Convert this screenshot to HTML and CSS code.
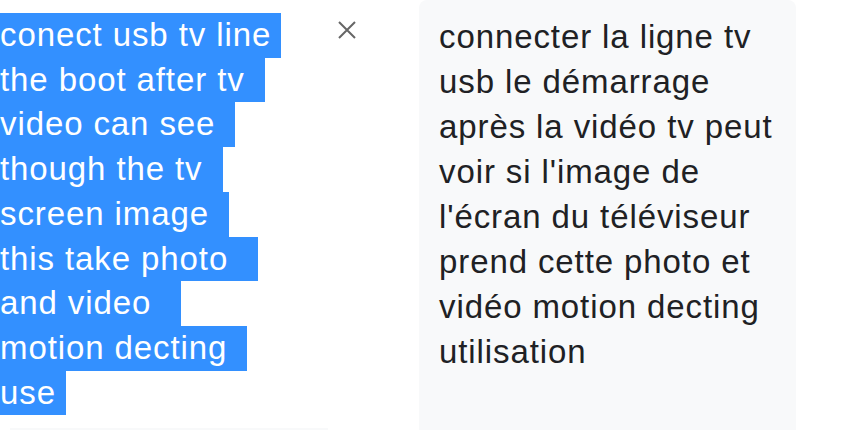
FILE: index.html
```html
<!DOCTYPE html>
<html lang="en">
<head>
    <meta charset="UTF-8">
    <meta name="viewport" content="width=device-width, initial-scale=1.0">
    <title>Translate</title>
    <link rel="stylesheet" href="styles.css">
</head>
<body>

    <div class="translator">
        <!-- Texte source (sélectionné) -->
        <div class="source">
            <div class="source-text">
                <span class="sel">conect usb tv line </span>
                <span class="sel">the boot after tv  </span>
                <span class="sel">video can see  </span>
                <span class="sel">though the tv  </span>
                <span class="sel">screen image  </span>
                <span class="sel">this take photo   </span>
                <span class="sel">and video   </span>
                <span class="sel">motion decting  </span>
                <span class="sel">use </span>
            </div>
            <div class="source-footer"></div>
        </div>

        <button class="clear-btn" type="button" aria-label="Effacer">
            <svg width="20" height="20" viewBox="0 0 20 20">
                <path d="M2 2 L18 18 M18 2 L2 18" stroke="#666" stroke-width="2" fill="none"/>
            </svg>
        </button>

        <!-- Traduction -->
        <div class="target">
            <p>connecter la ligne tv usb le démarrage après la vidéo tv peut voir si l'image de l'écran du téléviseur prend cette photo et vidéo motion decting utilisation</p>
        </div>
    </div>

</body>
</html>
```

FILE: styles.css
```css
/* Estilos Globales */
body {
    font-family: 'Liberation Sans', Arial, sans-serif;
    background-color: #ffffff;
    margin: 0;
    padding: 0;
    color: #202124;
    overflow: hidden;
}

.translator {
    display: flex;
    align-items: flex-start;
    height: 430px;
}

.source {
    width: 330px;
    display: flex;
    flex-direction: column;
    height: 100%;
}

.source-text {
    padding-top: 13px;
    font-size: 33px;
    letter-spacing: 0.9px;
    line-height: 44.7px;
    flex: 1;
}

.sel {
    display: block;
    width: fit-content;
    white-space: pre;
    background-color: #3390ff;
    color: #ffffff;
}

.source-footer {
    margin-left: 10px;
    width: 318px;
    height: 2px;
    background-color: #f8f9fa;
}

.clear-btn {
    width: 89px;
    padding: 20px 0 0 7px;
    border: none;
    background: none;
    text-align: left;
    cursor: pointer;
}

.clear-btn svg {
    display: block;
}

.target {
    width: 377px;
    height: 100%;
    box-sizing: border-box;
    padding: 14px 20px 0 20px;
    background-color: #f8f9fa;
    border-radius: 8px 8px 0 0;
}

.target p {
    margin: 0;
    font-size: 33px;
    letter-spacing: 0.9px;
    line-height: 45px;
}
```
